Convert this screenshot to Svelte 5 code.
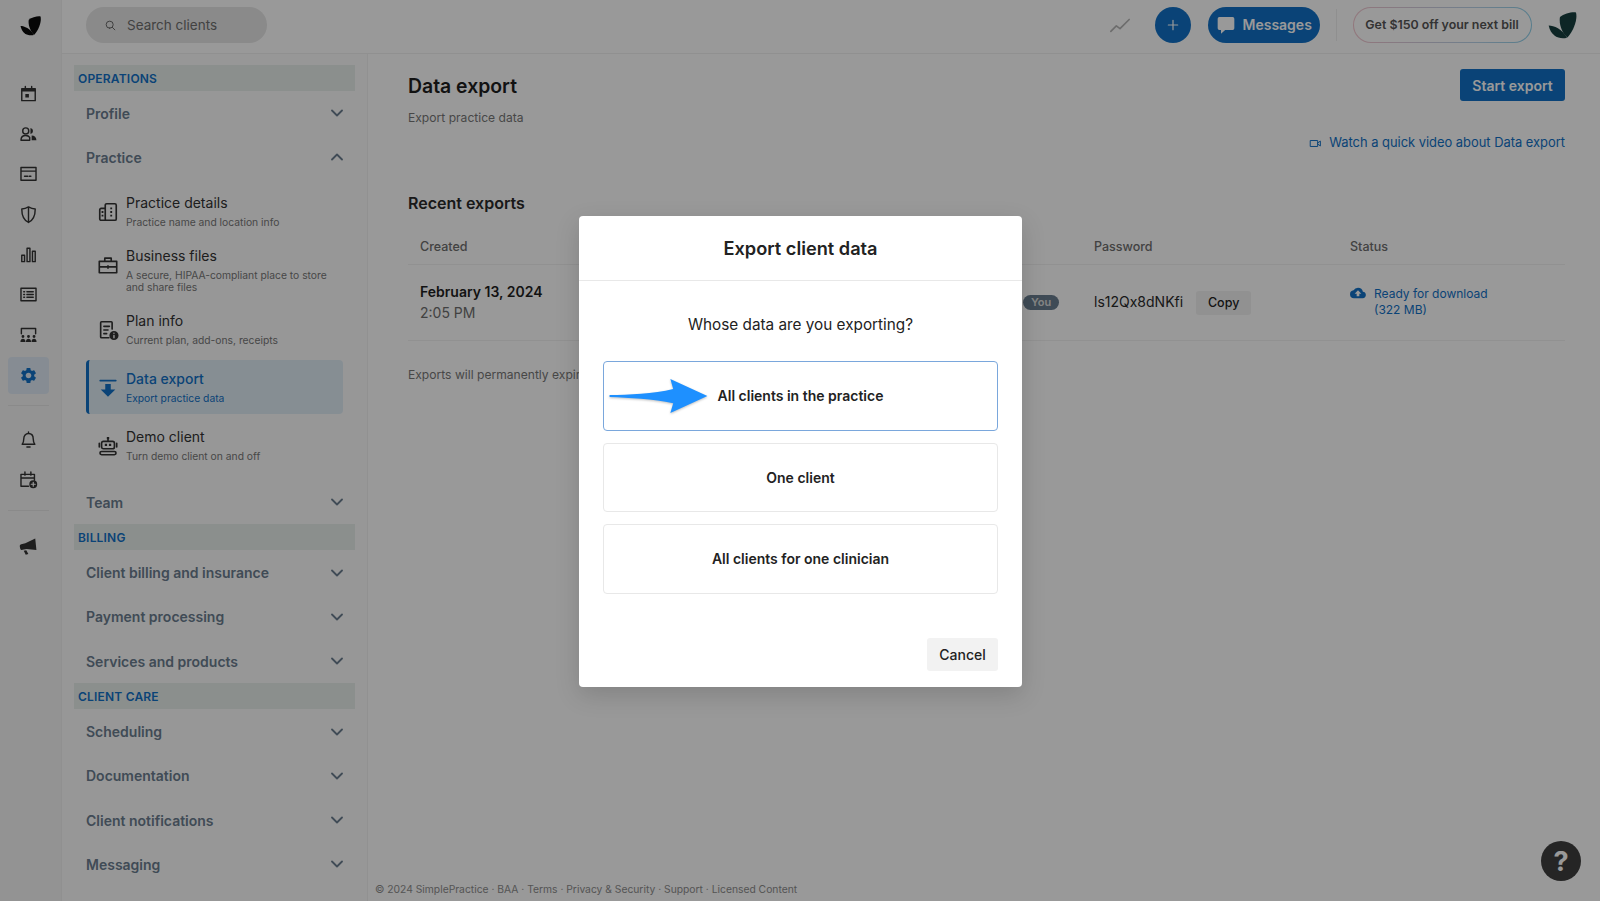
<script>
  const railTop = [
    { name: 'calendar' },
    { name: 'clients' },
    { name: 'card' },
    { name: 'shield' },
    { name: 'bars' },
    { name: 'list' },
    { name: 'room' },
    { name: 'gear', active: true }
  ];

  // s = stroked path, f = filled path, k = knocked out in white on top
  const icons = {
    calendar: { s: 'M3.500 6h17v15h-17zM8 3v3M16 3v3', f: 'M3.500 6h17v3.500h-17zM8 12.500h4.500v4.500H8z' },
    clients: { s: 'M2.500 20.500c0-4 2.500-6 6-6 2 0 4 .8 5 2.500v3.500zM8.500 12.500a3.800 3.800 0 1 0 0-7.600 3.800 3.800 0 0 0 0 7.600z', f: 'M14.500 5a3.800 3.800 0 0 1 0 7.500zM16 14.500c3.500 0 6 2 6 6h-6z' },
    card: { s: 'M2.500 4.500h19v16h-19zM2.500 9h19M7 15.500h4M13 15.500h2' },
    shield: { s: 'M12 2.500c3 1.800 5.500 2.500 8.500 2.500 0 8.500-2 14-8.500 17C5.500 19 3.500 13.500 3.500 5 6.500 5 9 4.300 12 2.500zM12 2.500V22' },
    bars: { s: 'M3.500 13h3.500v8H3.500zM10.200 4h3.600v17h-3.600zM17 8h3.500v13H17z' },
    list: { s: 'M2.500 4h19v16h-19zM6 8.500h1M10 8.500h8M6 12h1M10 12h8M6 15.500h1M10 15.500h8' },
    room: { s: 'M3 11V4.500h18V11', f: 'M5 12.700a1.800 1.800 0 1 0 0 3.600 1.800 1.800 0 0 0 0-3.600zM12 12.700a1.800 1.800 0 1 0 0 3.600 1.800 1.800 0 0 0 0-3.600zM19 12.700a1.800 1.800 0 1 0 0 3.600 1.800 1.800 0 0 0 0-3.600zM1.800 21.500c0-3 1.400-4 3.200-4s3.200 1 3.200 4zM8.800 21.500c0-3 1.400-4 3.200-4s3.200 1 3.200 4zM15.800 21.500c0-3 1.400-4 3.200-4s3.200 1 3.200 4z' },
    gear: { f: 'M19.140 12.940c.04-.3.06-.61.06-.94 0-.32-.02-.64-.07-.94l2.030-1.580a.49.49 0 0 0 .12-.61l-1.920-3.320a.488.488 0 0 0-.59-.22l-2.390.96c-.5-.38-1.030-.7-1.620-.94l-.36-2.540a.484.484 0 0 0-.48-.41h-3.840c-.24 0-.43.17-.47.41l-.36 2.540c-.59.24-1.130.57-1.620.94l-2.390-.96c-.22-.08-.47 0-.59.22L2.740 8.870c-.12.21-.08.47.12.61l2.030 1.580c-.05.3-.09.63-.09.94s.02.64.07.94l-2.030 1.580a.49.49 0 0 0-.12.61l1.920 3.320c.12.22.37.29.59.22l2.390-.96c.5.38 1.030.7 1.620.94l.36 2.540c.05.24.24.41.48.41h3.840c.24 0 .44-.17.47-.41l.36-2.540c.59-.24 1.130-.56 1.620-.94l2.390.96c.22.08.47 0 .59-.22l1.920-3.320c.12-.22.07-.47-.12-.61l-2.010-1.580zM12 15.600c-1.980 0-3.600-1.620-3.600-3.600s1.620-3.600 3.600-3.600 3.600 1.620 3.600 3.600-1.620 3.600-3.600 3.600z' },
    bell: { s: 'M4 18c1.500-1.500 2-3 2-6.500C6 7 8.500 4.500 12 4.500s6 2.500 6 7c0 3.500.5 5 2 6.500zM10 21.500h4M12 2.500v2' },
    calplus: { s: 'M2.500 5.500h17V13M12 20.500H2.500v-15M2.500 10h17M7.500 2.500v4M15 2.500v4', f: 'M18 13a5 5 0 1 0 0 10 5 5 0 0 0 0-10z', k: 'M18 15.500v5M15.500 18h5' },
    megaphone: { f: 'M20.500 2l1.500 14.500L9.500 15l-5 1.200a2.500 2.500 0 0 1-3-1.800L1 12.200a2.500 2.500 0 0 1 1.800-3L8 8zM6 17.500l3.200-.8 2.600 4.800-3.300 1z' },
    building: { s: 'M9 21H4.500A1.500 1.500 0 0 1 3 19.500v-10A1.500 1.500 0 0 1 4.500 8H9M9 4.500A1.500 1.500 0 0 1 10.500 3h9A1.500 1.500 0 0 1 21 4.500v15a1.500 1.500 0 0 1-1.500 1.500h-9A1.500 1.500 0 0 1 9 19.500z', f: 'M5 11h2v2H5zM5 15h2v2H5zM14.500 7h2v2h-2zM14.500 11h2v2h-2zM14.500 15h2v2h-2z' },
    briefcase: { s: 'M2.500 8h19v12.500h-19zM2.500 14h19M8.500 8V4.500h7V8M12 13v2.500' },
    plan: { s: 'M13 20.500H5a1 1 0 0 1-1-1V4a1 1 0 0 1 1-1h10.500a1 1 0 0 1 1 1v7M7.500 8h6M7.500 12h4.500M7.500 16h3', f: 'M18.500 13a5 5 0 1 0 0 10 5 5 0 0 0 0-10z', k: 'M18.500 18v2.500M18.500 15.500v.01' },
    download: { s: 'M3.500 4h17', f: 'M9 7.500h6v6h5L12 21.500 4 13.500h5z' },
    robot: { s: 'M7 7h10a2 2 0 0 1 2 2v4a2 2 0 0 1-2 2H7a2 2 0 0 1-2-2V9a2 2 0 0 1 2-2zM12 7V4M2.500 9v4M21.500 9v4M5 18h14a1.700 1.700 0 0 1 0 3.500H5A1.700 1.700 0 0 1 5 18z', f: 'M8.500 9.500H11V12H8.500zM13 9.500h2.500V12H13zM10.700 2.200h2.600v2.300h-2.600z' },
    search: { s: 'M10.500 17a6.500 6.500 0 1 0 0-13 6.500 6.500 0 0 0 0 13zM15.500 15.500L20 20' },
    trend: { s: 'M2 19l6-6 4 3 10-10' },
    plus: { s: 'M12 5v14M5 12h14' },
    video: { s: 'M3 6.500h13v11H3zM16 11l5-3.500v9L16 13' },
    cloud: { f: 'M19.350 10.040A7.490 7.490 0 0 0 12 4a7.500 7.500 0 0 0-6.650 4.040A6 6 0 0 0 6 20h13a5 5 0 0 0 .35-9.960zM14 13v4h-4v-4H7l5-5 5 5z' },
    bubble: { f: 'M4 2.500h16a2 2 0 0 1 2 2V16a2 2 0 0 1-2 2H11l-5 4.500V18H4a2 2 0 0 1-2-2V4.500a2 2 0 0 1 2-2z' }
  };

  const practiceItems = [
    { icon: 'building', title: 'Practice details', sub: 'Practice name and location info' },
    { icon: 'briefcase', title: 'Business files', sub: 'A secure, HIPAA-compliant place to store and share files' },
    { icon: 'plan', title: 'Plan info', sub: 'Current plan, add-ons, receipts' },
    { icon: 'download', title: 'Data export', sub: 'Export practice data', active: true },
    { icon: 'robot', title: 'Demo client', sub: 'Turn demo client on and off' }
  ];

  const billing = ['Client billing and insurance', 'Payment processing', 'Services and products'];
  const care = ['Scheduling', 'Documentation', 'Client notifications', 'Messaging'];
  const footerLinks = ['© 2024 SimplePractice', 'BAA', 'Terms', 'Privacy & Security', 'Support', 'Licensed Content'];
  const options = ['All clients in the practice', 'One client', 'All clients for one clinician'];
</script>

{#snippet icon(name, cls)}
  <svg class="icon {cls}" viewBox="0 0 24 24" aria-hidden="true">
    {#if icons[name].s}<path class="st" d={icons[name].s} />{/if}
    {#if icons[name].f}<path class="fi" d={icons[name].f} />{/if}
    {#if icons[name].k}<path class="ko" d={icons[name].k} />{/if}
  </svg>
{/snippet}

{#snippet logo(cls)}
  <svg class="logo {cls}" viewBox="0 0 30 27" aria-hidden="true">
    <path d="M12 5C16 1.500 25-.5 28 .5c1.500 5.500-1 16.500-8.500 25C14.500 22 10.500 12 12 5z" />
    <path d="M.7 13.500c5.300 0 13.300 3.500 18.300 12.200C12 27.500 3 25 .7 13.500z" />
  </svg>
{/snippet}

{#snippet row(label, open)}
  <div class="row">
    <span>{label}</span>
    <svg class="chev" class:open viewBox="0 0 12 8" aria-hidden="true"><path d="M1 1.500l5 5 5-5" /></svg>
  </div>
{/snippet}

<div class="app">
  <nav class="rail">
    <div class="rail-logo">{@render logo('small')}</div>
    <div class="rail-group">
      {#each railTop as item}
        <div class="rail-btn" class:active={item.active}>{@render icon(item.name, 'rail-ic')}</div>
      {/each}
    </div>
    <div class="rail-sep"></div>
    <div class="rail-btn">{@render icon('bell', 'rail-ic')}</div>
    <div class="rail-btn">{@render icon('calplus', 'rail-ic')}</div>
    <div class="rail-sep second"></div>
    <div class="rail-btn">{@render icon('megaphone', 'rail-ic')}</div>
  </nav>

  <div class="right">
    <header class="topbar">
      <div class="search">
        {@render icon('search', 'search-ic')}
        <span>Search clients</span>
      </div>
      <div class="top-actions">
        {@render icon('trend', 'trend-ic')}
        <div class="plus">{@render icon('plus', 'plus-ic')}</div>
        <div class="messages">{@render icon('bubble', 'bubble-ic')}<span>Messages</span></div>
        <div class="top-sep"></div>
        <div class="promo">Get $150 off your next bill</div>
        {@render logo('big')}
      </div>
    </header>

    <div class="body">
      <aside class="sidebar">
        <div class="section">Operations</div>
        {@render row('Profile', false)}
        {@render row('Practice', true)}
        <div class="sublist">
          {#each practiceItems as item}
            <div class="subitem" class:active={item.active}>
              {@render icon(item.icon, 'sub-ic')}
              <div class="subtext">
                <div class="subtitle">{item.title}</div>
                <div class="subdesc">{item.sub}</div>
              </div>
            </div>
          {/each}
        </div>
        {@render row('Team', false)}
        <div class="section">Billing</div>
        {#each billing as label}
          {@render row(label, false)}
        {/each}
        <div class="section">Client care</div>
        {#each care as label}
          {@render row(label, false)}
        {/each}
      </aside>

      <main class="main">
        <div class="content">
          <div class="head">
            <div>
              <h1>Data export</h1>
              <p class="lead">Export practice data</p>
            </div>
            <button class="primary">Start export</button>
          </div>
          <div class="video-link">{@render icon('video', 'video-ic')}Watch a quick video about Data export</div>
          <h2>Recent exports</h2>
          <div class="table">
            <div class="cell th">Created</div>
            <div class="cell th"></div>
            <div class="cell th">Password</div>
            <div class="cell th">Status</div>
            <div class="cell td date">
              <strong>February 13, 2024</strong>
              <span>2:05 PM</span>
            </div>
            <div class="cell td"><span class="badge">You</span></div>
            <div class="cell td pw"><span class="pw-text">ls12Qx8dNKfi</span> <button class="copy">Copy</button></div>
            <div class="cell td status">
              {@render icon('cloud', 'cloud-ic')}
              <span>Ready for download<br />(322 MB)</span>
            </div>
          </div>
          <p class="note">Exports will permanently expire after 7 days</p>
        </div>
        <footer class="footer">
          {#each footerLinks as link, i}{i > 0 ? ' · ' : ''}{link}{/each}
        </footer>
      </main>
    </div>
  </div>

  <div class="help">?</div>

  <div class="backdrop">
    <div class="modal">
      <div class="modal-title">Export client data</div>
      <div class="modal-body">
        <p class="question">Whose data are you exporting?</p>
        <div class="options">
          {#each options as option, i}
            <div class="option" class:selected={i === 0}>
              {#if i === 0}
                <svg class="arrow" viewBox="0 0 104 40" aria-hidden="true">
                  <path d="M1 19c20-.6 46-1 67-6.500L65 2l39 18-39 18 3-10.500C47 23 21 22 1 21z" />
                </svg>
              {/if}
              {option}
            </div>
          {/each}
        </div>
        <div class="modal-foot"><button class="cancel">Cancel</button></div>
      </div>
    </div>
  </div>
</div>

<style>
  :global(body) {
    margin: 0;
    background: #fff;
    font-family: Inter, "Liberation Sans", sans-serif;
  }

  .app {
    position: relative;
    display: flex;
    width: 1600px;
    height: 901px;
    overflow: hidden;
    background: #fff;
    color: #1f1f1f;
  }

  .rail {
    width: 61px;
    flex: none;
    border-right: 1px solid #f0f0f0;
    background: #f5f5f5;
    display: flex;
    flex-direction: column;
    align-items: center;
  }
  .rail-logo {
    height: 73px;
    padding-top: 16px;
    box-sizing: border-box;
  }
  .rail-group {
    display: flex;
    flex-direction: column;
  }
  .rail-btn {
    width: 41px;
    height: 40.300px;
    margin-left: -4px;
    display: flex;
    align-items: center;
    justify-content: center;
    border-radius: 4px;
    color: #333;
  }
  .rail-btn.active {
    background: #dfeaf5;
    color: #1171c6;
    height: 37px;
    margin-top: 2px;
  }
  .rail-sep {
    width: 41px;
    margin: 11px 0 13px -4px;
    border-top: 1px solid #e6e6e6;
  }
  .rail-sep.second {
    margin: 10px 0 16px -4px;
  }

  .icon {
    display: block;
    flex: none;
    color: inherit;
  }
  .st {
    fill: none;
    stroke: currentColor;
    stroke-width: 1.800;
    stroke-linejoin: round;
    stroke-linecap: round;
  }
  .fi {
    fill: currentColor;
  }
  .ko {
    fill: none;
    stroke: #fff;
    stroke-width: 1.500;
    stroke-linecap: round;
  }
  .rail-ic {
    width: 19px;
    height: 19px;
  }

  .logo path {
    fill: currentColor;
  }
  .logo.small {
    display: block;
    width: 22px;
    height: 20px;
    color: #0a0a0a;
  }
  .logo.big {
    width: 30px;
    height: 27px;
    color: #163f3f;
  }

  .right {
    flex: 1;
    min-width: 0;
    display: flex;
    flex-direction: column;
  }

  .topbar {
    height: 54px;
    box-sizing: border-box;
    flex: none;
    border-bottom: 1px solid #f0f0f0;
    display: flex;
    align-items: center;
    padding: 0 22px 3px 24px;
  }
  .search {
    width: 181px;
    height: 36px;
    box-sizing: border-box;
    border-radius: 18px;
    background: #e6e6e6;
    display: flex;
    align-items: center;
    padding-left: 18px;
    gap: 10px;
    color: #6e6e6e;
    font-size: 13.500px;
  }
  .search-ic {
    width: 13px;
    height: 13px;
    color: #666;
  }
  .top-actions {
    margin-left: auto;
    display: flex;
    align-items: center;
    gap: 16.500px;
  }
  .trend-ic {
    width: 22px;
    height: 22px;
    color: #b5b5b5;
    margin-right: 8px;
  }
  .plus {
    width: 36px;
    height: 36px;
    border-radius: 50%;
    background: #1171c6;
    display: flex;
    align-items: center;
    justify-content: center;
    color: #fff;
  }
  .plus-ic {
    width: 16px;
    height: 16px;
  }
  .messages {
    height: 36px;
    width: 112px;
    box-sizing: border-box;
    border-radius: 18px;
    background: #1171c6;
    color: #fff;
    display: flex;
    align-items: center;
    padding: 0 0 1px 8px;
    gap: 7px;
    font-size: 14px;
    font-weight: 600;
  }
  .bubble-ic {
    width: 20px;
    height: 20px;
  }
  .top-sep {
    width: 1px;
    height: 32px;
    margin-right: -1px;
    background: #efefef;
  }
  .promo {
    height: 36px;
    width: 179px;
    box-sizing: border-box;
    border: 1px solid transparent;
    border-radius: 18px;
    background: linear-gradient(#fff, #fff) padding-box,
      linear-gradient(90deg, #f4c6cf, #b9d4ea 70%, #8fd0ea) border-box;
    display: flex;
    align-items: center;
    justify-content: center;
    padding-bottom: 1px;
    font-size: 12.400px;
    font-weight: 600;
    color: #555;
    white-space: nowrap;
  }

  .body {
    flex: 1;
    min-height: 0;
    display: flex;
  }

  .sidebar {
    width: 306px;
    flex: none;
    box-sizing: border-box;
    padding: 11px 12px 0 12px;
    border-right: 1px solid #f2f2f2;
    background: #fcfcfc;
  }
  .section {
    height: 26px;
    box-sizing: border-box;
    padding: 1px 0 0 4px;
    line-height: 25px;
    background: #e8eeec;
    color: #1171c6;
    font-size: 12px;
    font-weight: 600;
    text-transform: uppercase;
    letter-spacing: 0.2px;
  }
  .row {
    height: 44.300px;
    display: flex;
    align-items: center;
    justify-content: space-between;
    padding: 0 12px;
    color: #6b7d8f;
    font-size: 14px;
    font-weight: 600;
  }
  .chev {
    width: 12px;
    height: 8px;
    flex: none;
  }
  .chev.open {
    transform: rotate(180deg);
  }
  .chev path {
    fill: none;
    stroke: #6b7d8f;
    stroke-width: 1.800;
    stroke-linecap: round;
    stroke-linejoin: round;
  }

  .sublist {
    padding: 4px 0 8.500px;
  }
  .subitem {
    margin: 0 12px;
    min-height: 54px;
    box-sizing: border-box;
    border-left: 3px solid transparent;
    border-radius: 4px;
    padding: 10px 8px 8.500px;
    display: flex;
    align-items: flex-start;
    gap: 7px;
    color: #333;
  }
  .subitem:first-child {
    min-height: 53px;
  }
  .subitem.active {
    margin-top: 4px;
    margin-bottom: 4px;
    border-left-color: #1171c6;
    background: #e0edf6;
    color: #1171c6;
  }
  .sub-ic {
    width: 22px;
    height: 22px;
    margin-top: 7px;
  }
  .subtitle {
    font-size: 14px;
    line-height: 18px;
  }
  .subdesc {
    margin-top: 4px;
    font-size: 10.300px;
    line-height: 12.300px;
    color: #777;
  }
  .subitem.active .subdesc {
    color: #1171c6;
  }
  .subitem.active .subtitle {
    font-weight: 500;
  }

  .main {
    flex: 1;
    min-width: 0;
    display: flex;
    flex-direction: column;
  }
  .content {
    flex: 1;
    padding: 0 35px 0 40px;
  }
  .head {
    display: flex;
    justify-content: space-between;
    align-items: flex-start;
    padding-top: 15px;
  }
  h1 {
    margin: 1px 0 0;
    font-size: 19.400px;
    line-height: 32px;
    font-weight: 600;
    color: #1f1f1f;
  }
  .lead {
    margin: 8px 0 0;
    font-size: 12.100px;
    line-height: 16px;
    color: #777;
  }
  .primary {
    width: 105px;
    height: 32px;
    border: none;
    border-radius: 3px;
    background: #1171c6;
    color: #fff;
    font: 600 14px Inter, "Liberation Sans", sans-serif;
  }
  .video-link {
    margin-top: 8px;
    display: flex;
    justify-content: flex-end;
    align-items: center;
    gap: 7px;
    color: #1171c6;
    font-size: 12.900px;
    line-height: 18px;
  }
  .video-ic {
    width: 13px;
    height: 13px;
  }
  h2 {
    margin: 40px 0 0;
    font-size: 16px;
    line-height: 22px;
    font-weight: 600;
    color: #2a2a2a;
  }
  .table {
    margin-top: 17px;
    display: grid;
    grid-template-columns: 603px 71px 256px 227px;
  }
  .cell {
    padding-left: 12px;
    box-sizing: border-box;
  }
  .th {
    height: 34px;
    display: flex;
    align-items: center;
    padding-bottom: 2px;
    border-bottom: 1px solid #f2f2f2;
    font-size: 12.500px;
    font-weight: 500;
    color: #6e6e6e;
  }
  .td {
    height: 76px;
    display: flex;
    align-items: center;
    border-bottom: 1px solid #f2f2f2;
    font-size: 14px;
  }
  .date {
    flex-direction: column;
    align-items: flex-start;
    justify-content: center;
    gap: 3px;
    line-height: 18px;
  }
  .date strong {
    font-weight: 600;
  }
  .date span {
    color: #6e6e6e;
  }
  .badge {
    background: #6a7d8f;
    color: #ddd;
    border-radius: 8px;
    padding: 0 8px;
    font-size: 11px;
    line-height: 15px;
    font-weight: 600;
  }
  .pw {
    gap: 13px;
    color: #2a2a2a;
    font-size: 14px;
    padding-bottom: 2px;
  }
  .pw-text {
    margin-top: -1px;
  }
  .copy {
    width: 55px;
    height: 24px;
    border: none;
    border-radius: 3px;
    background: #f2f2f2;
    color: #222;
    font: 500 12.500px Inter, "Liberation Sans", sans-serif;
    margin-top: 2px;
  }
  .status {
    align-items: flex-start;
    padding-top: 21px;
    gap: 8px;
    color: #1171c6;
    font-size: 12px;
    line-height: 16px;
  }
  .cloud-ic {
    width: 16px;
    height: 16px;
    margin-top: -1px;
  }
  .note {
    margin: 26px 0 0;
    font-size: 12.100px;
    line-height: 16px;
    color: #777;
  }
  .footer {
    height: 26px;
    box-sizing: border-box;
    padding: 1px 0 0 7px;
    font-size: 10.300px;
    line-height: 26px;
    color: #8d8d8d;
  }

  .help {
    position: absolute;
    left: 1541px;
    top: 841px;
    width: 40px;
    height: 40px;
    border-radius: 50%;
    background: #3f3f3f;
    color: #fff;
    display: flex;
    align-items: center;
    justify-content: center;
    font-size: 27px;
    font-weight: 700;
  }

  .backdrop {
    position: absolute;
    inset: 0;
    background: rgba(0, 0, 0, 0.4);
    display: flex;
    justify-content: center;
    align-items: flex-start;
    padding-top: 216px;
    box-sizing: border-box;
  }
  .modal {
    width: 443px;
    height: 471px;
    background: #fff;
    border-radius: 4px;
    box-shadow: 0 8px 24px rgba(0, 0, 0, 0.15);
    display: flex;
    flex-direction: column;
    margin-left: 1px;
  }
  .modal-title {
    height: 65px;
    flex: none;
    box-sizing: border-box;
    border-bottom: 1px solid #e8e8e8;
    display: flex;
    align-items: center;
    justify-content: center;
    font-size: 18.200px;
    font-weight: 600;
    color: #222;
  }
  .modal-body {
    flex: 1;
    display: flex;
    flex-direction: column;
    padding: 0 24px;
  }
  .question {
    margin: 34px 0 0;
    text-align: center;
    font-size: 15.300px;
    line-height: 20px;
    color: #222;
  }
  .options {
    margin-top: 26px;
    display: flex;
    flex-direction: column;
    gap: 12px;
  }
  .option {
    position: relative;
    height: 69.500px;
    box-sizing: border-box;
    border: 1px solid #e8e8e8;
    border-radius: 4px;
    display: flex;
    align-items: center;
    justify-content: center;
    font-size: 14px;
    font-weight: 600;
    color: #222;
  }
  .option.selected {
    border-color: #7aa7dc;
  }
  .arrow {
    position: absolute;
    left: 2px;
    top: 15px;
    width: 104px;
    height: 38px;
    fill: #1e90ff;
    filter: drop-shadow(0 1px 1px rgba(0, 0, 0, 0.25));
  }
  .modal-foot {
    margin-top: auto;
    padding-bottom: 16px;
    display: flex;
    justify-content: flex-end;
  }
  .cancel {
    width: 71px;
    height: 33px;
    border: none;
    border-radius: 3px;
    background: #f2f2f2;
    color: #222;
    font: 500 14px Inter, "Liberation Sans", sans-serif;
  }
</style>
